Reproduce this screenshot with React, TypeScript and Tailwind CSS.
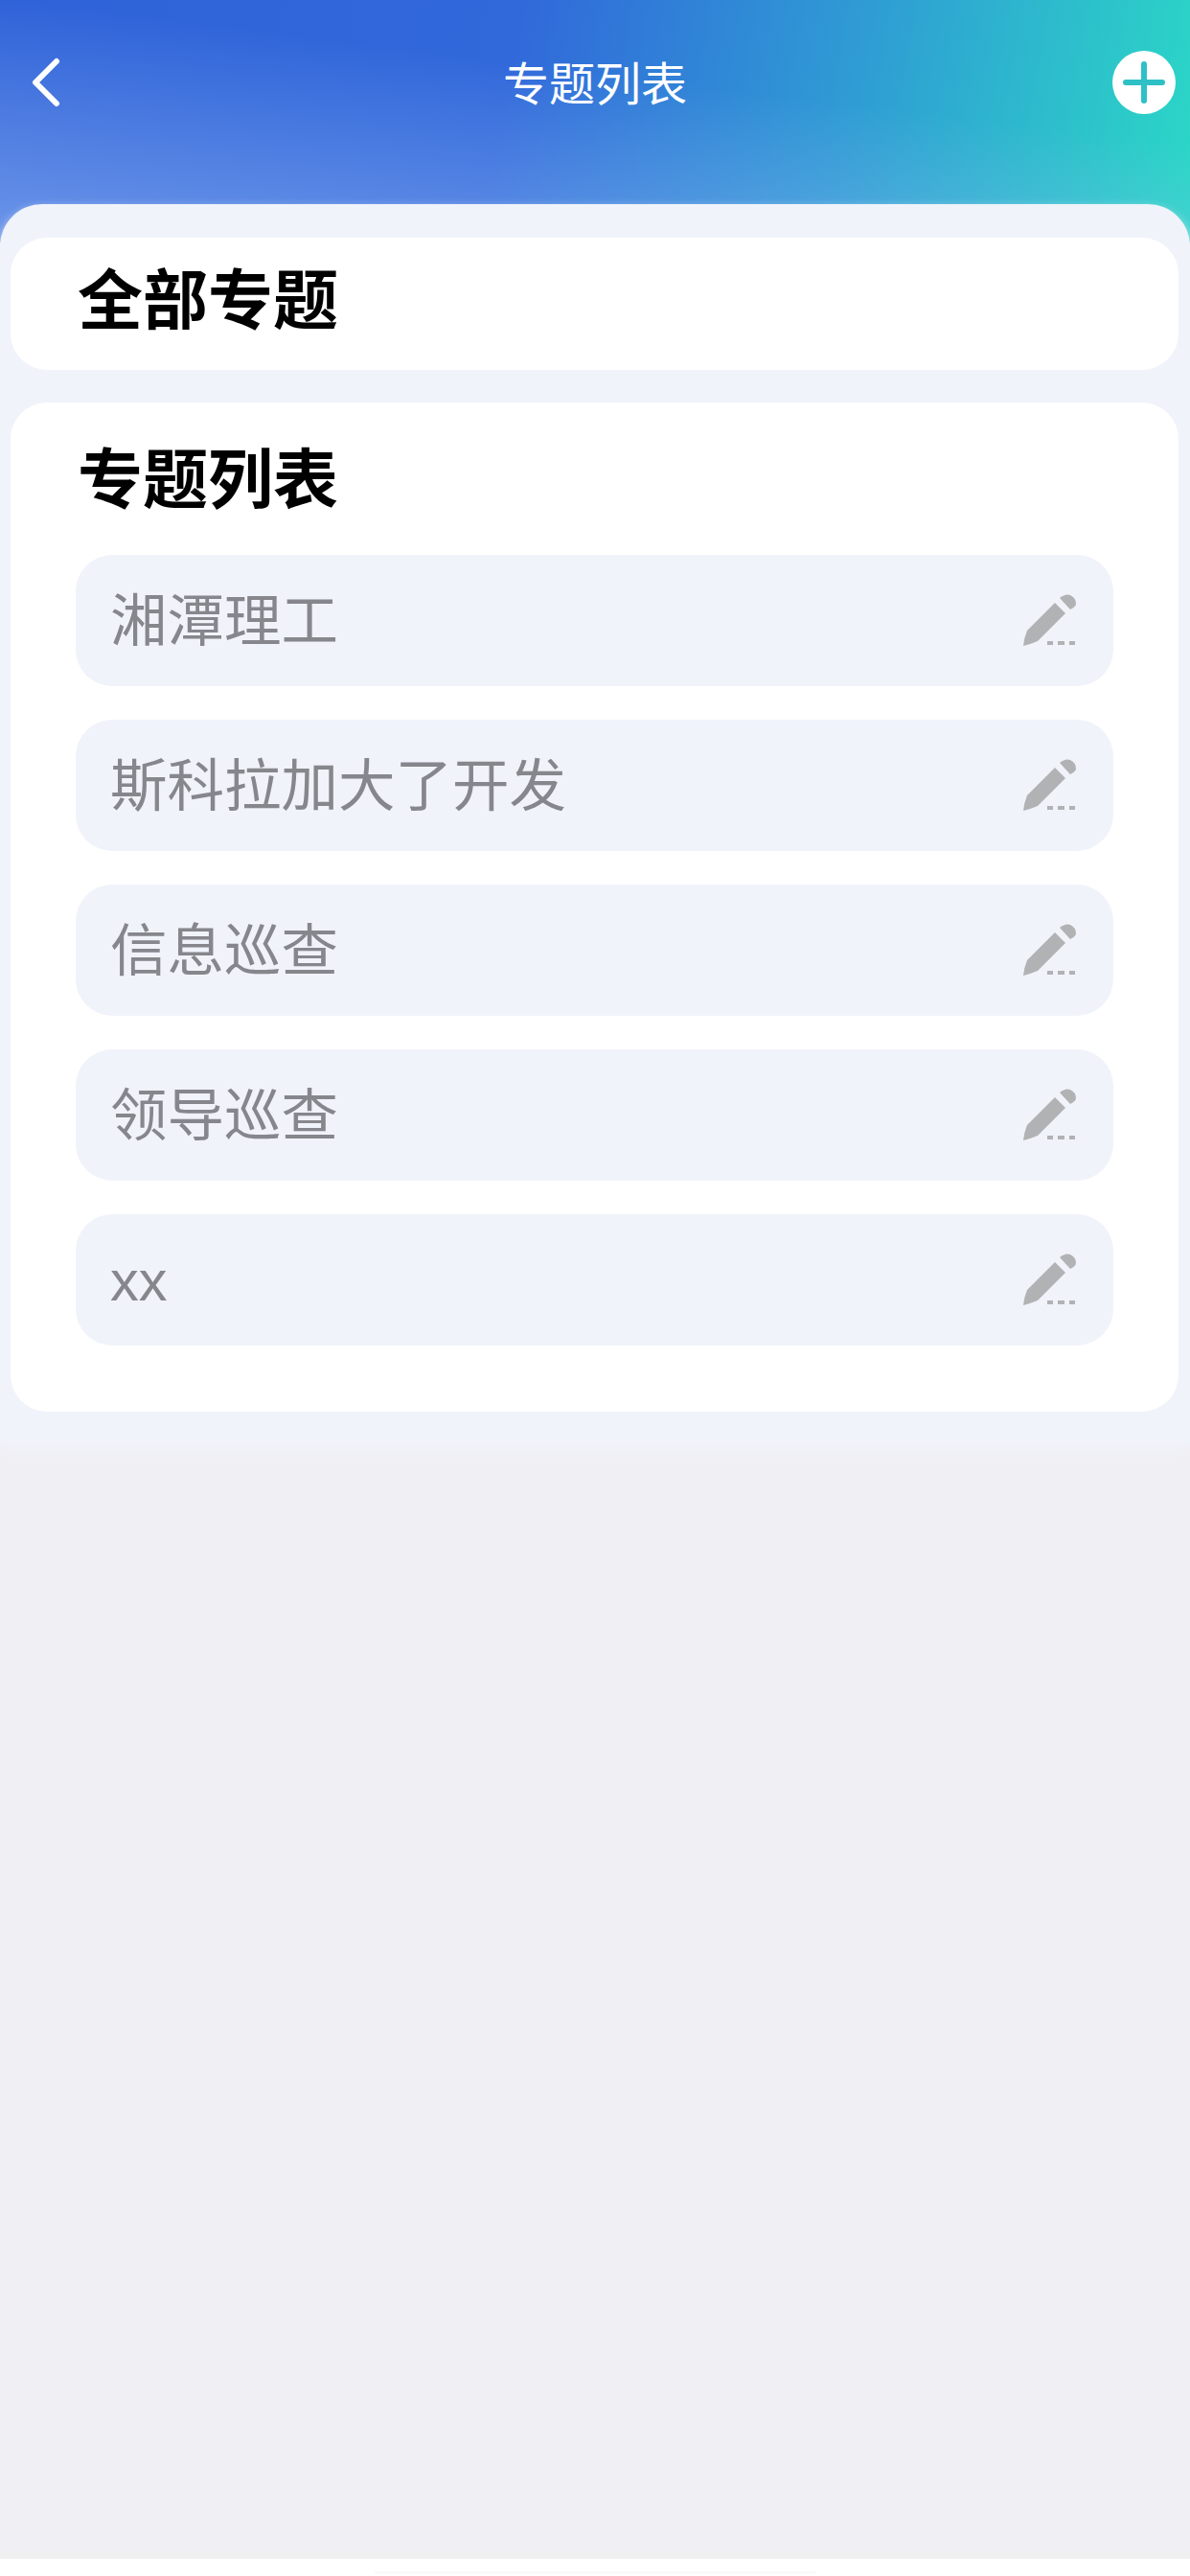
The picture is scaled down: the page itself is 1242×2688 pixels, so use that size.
const cjk = "font-['Liberation_Sans','Noto_Sans_CJK_SC',sans-serif]";

const topics = ["湘潭理工", "斯科拉加大了开发", "信息巡查", "领导巡查", "xx"];

function PencilIcon() {
  return (
    <svg width="56" height="56" viewBox="0 0 56 56" className="shrink-0">
      <path d="M33 9 L44 20 L15 49 Q8 52 0 54 Q1 45 4 38 Z" fill="#b1b2b3" />
      <path d="M38 4 Q44 -1 49 1 Q55 4 55 10 Q55 13 49 16 Z" fill="#b1b2b3" />
      <rect x="25" y="49" width="6" height="4" fill="#b1b2b3" />
      <rect x="36" y="49" width="7" height="4" fill="#b1b2b3" />
      <rect x="48" y="49" width="6" height="4" fill="#b1b2b3" />
    </svg>
  );
}

function TopicRow({ name }: { name: string }) {
  return (
    <div className="flex h-[137px] items-center justify-between rounded-[38px] bg-[#f0f3fa] pl-[36px] pr-[38px]">
      <span className="pt-[2px] text-[59.5px] leading-none text-[#86878c]">{name}</span>
      <PencilIcon />
    </div>
  );
}

export default function App() {
  return (
    <div className={`flex h-[2688px] w-[1242px] flex-col overflow-hidden bg-white ${cjk}`}>
      <div className="flex h-[253px] shrink-0 items-start justify-between bg-[linear-gradient(187deg,rgba(150,185,245,0)_37%,rgba(150,185,245,0.55)_95%),linear-gradient(100deg,#2f62d8_0%,#3168da_42%,#2f9bd4_70%,#2bd8c6_100%)] pl-[33px] pr-[15px] pt-[53px]">
        <div className="w-[48px]">
          <svg width="32" height="66" viewBox="0 0 32 66" fill="none">
            <path d="M26 11 L4 33 L26 55" stroke="white" strokeWidth="6" strokeLinecap="round" strokeLinejoin="round" />
          </svg>
        </div>
        <span className="pt-[3px] text-[48px] leading-[66px] text-white">专题列表</span>
        <svg width="66" height="66" viewBox="0 0 66 66">
          <circle cx="33" cy="33" r="33" fill="white" />
          <path d="M33 14 V52 M14 33 H52" stroke="#2fc0c6" strokeWidth="6" strokeLinecap="round" />
        </svg>
      </div>

      <div className="flex-1 bg-[#f0eff4]">
        <div className="relative -mt-[40px] flex flex-col gap-[34px] rounded-t-[44px] bg-[#f0f3fa] pb-[34px] pl-[11px] pr-[12px] pt-[35px] shadow-[0_6px_12px_#f0f3fa]">
          <div className="flex h-[138px] items-center rounded-[38px] bg-white pb-[6px] pl-[70px]">
            <span className="text-[68px] font-bold leading-none text-black">全部专题</span>
          </div>
          <div className="flex flex-col rounded-[38px] bg-white px-[68px] pb-[69px] pt-[38px]">
            <div className="mb-[35px] ml-[2px] text-[68px] font-bold leading-[86px] text-black">专题列表</div>
            <div className="flex flex-col gap-[35px]">
              {topics.map((name) => (
                <TopicRow key={name} name={name} />
              ))}
            </div>
          </div>
        </div>
      </div>

      <div className="h-[7px] shrink-0 bg-[#f0f0f0]" />
      <div className="flex h-[18px] shrink-0 items-start justify-center bg-white pt-[13px]">
        <div className="h-[3px] w-[460px] bg-[#fafafa]" />
      </div>
    </div>
  );
}
